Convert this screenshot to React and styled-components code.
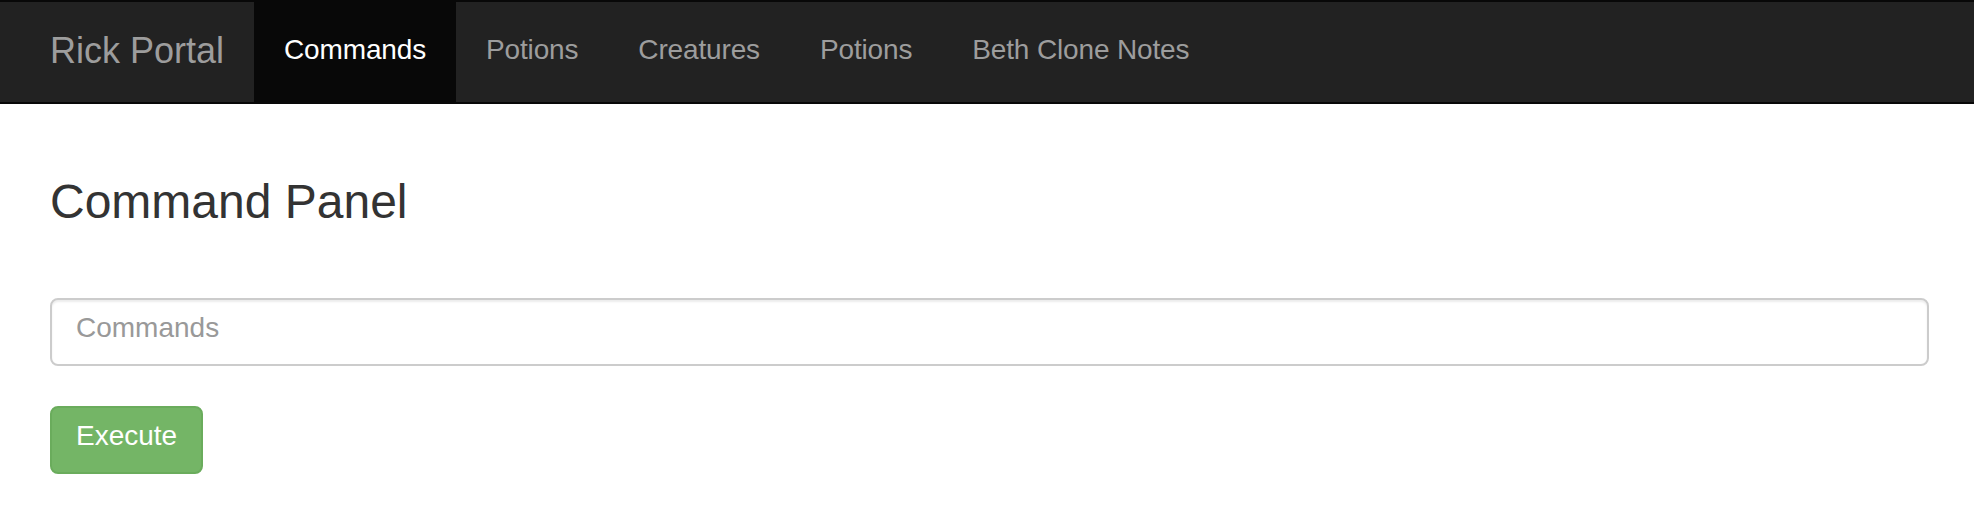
import React, { useState } from 'react';
import styled, { createGlobalStyle } from 'styled-components';

const GlobalStyle = createGlobalStyle`
  html, body {
    margin: 0;
    padding: 0;
    background: #fff;
    font-family: "Liberation Sans", Arial, Helvetica, sans-serif;
    color: #333;
  }
  * { box-sizing: border-box; }
`;

const links = ['Commands', 'Potions', 'Creatures', 'Potions', 'Beth Clone Notes'];

const App = () => {
  let [command, setCommand] = useState('');

  return (
    <>
      <GlobalStyle />
      <Navbar>
        <Brand href="#">Rick Portal</Brand>
        <NavList>
          {links.map((label, i) => (
            <NavItem key={i}>
              <NavLink href="#" $active={i === 0}>{label}</NavLink>
            </NavItem>
          ))}
        </NavList>
      </Navbar>
      <Container>
        <Heading>Command Panel</Heading>
        <FormGroup>
          <CommandInput
            type="text"
            value={command}
            placeholder="Commands"
            onChange={(e) => setCommand(e.target.value)}
          />
        </FormGroup>
        <ExecuteButton type="button">Execute</ExecuteButton>
      </Container>
    </>
  );
};

export default App;

const Navbar = styled.nav`
  display: flex;
  align-items: stretch;
  height: 104px;
  padding-left: 20px;
  background-color: #222;
  border-top: 2px solid #080808;
  border-bottom: 2px solid #080808;
`;

const Brand = styled.a`
  display: flex;
  align-items: center;
  padding: 0 30px 2px;
  font-size: 36px;
  color: #9d9d9d;
  text-decoration: none;
`;

const NavList = styled.ul`
  display: flex;
  margin: 0;
  padding: 0;
  list-style: none;
`;

const NavItem = styled.li`
  display: flex;
`;

const NavLink = styled.a`
  display: flex;
  align-items: center;
  padding: 0 30px 5px;
  font-size: 28px;
  letter-spacing: -0.15px;
  text-decoration: none;
  color: ${(p) => (p.$active ? '#fff' : '#9d9d9d')};
  background-color: ${(p) => (p.$active ? '#080808' : 'transparent')};
`;

const Container = styled.div`
  padding: 0 45px 0 50px;
`;

const Heading = styled.h3`
  margin: 72px 0 69px;
  font-size: 48px;
  font-weight: 500;
  line-height: 1.1;
  color: #333;
`;

const FormGroup = styled.div`
  margin-bottom: 40px;
`;

const CommandInput = styled.input`
  display: block;
  width: 100%;
  height: 68px;
  padding: 8px 24px 16px;
  font-size: 28px;
  font-family: inherit;
  color: #555;
  background-color: #fff;
  border: 2px solid #ccc;
  border-radius: 8px;
  box-shadow: inset 0 2px 2px rgba(0, 0, 0, 0.075);
  outline: none;

  &::placeholder {
    color: #999;
  }
`;

const ExecuteButton = styled.button`
  display: inline-block;
  height: 68px;
  padding: 0 24px 7px;
  font-size: 28px;
  font-family: inherit;
  color: #fff;
  background-color: #74b566;
  border: 2px solid #6aac5c;
  border-radius: 8px;
  cursor: pointer;
`;
